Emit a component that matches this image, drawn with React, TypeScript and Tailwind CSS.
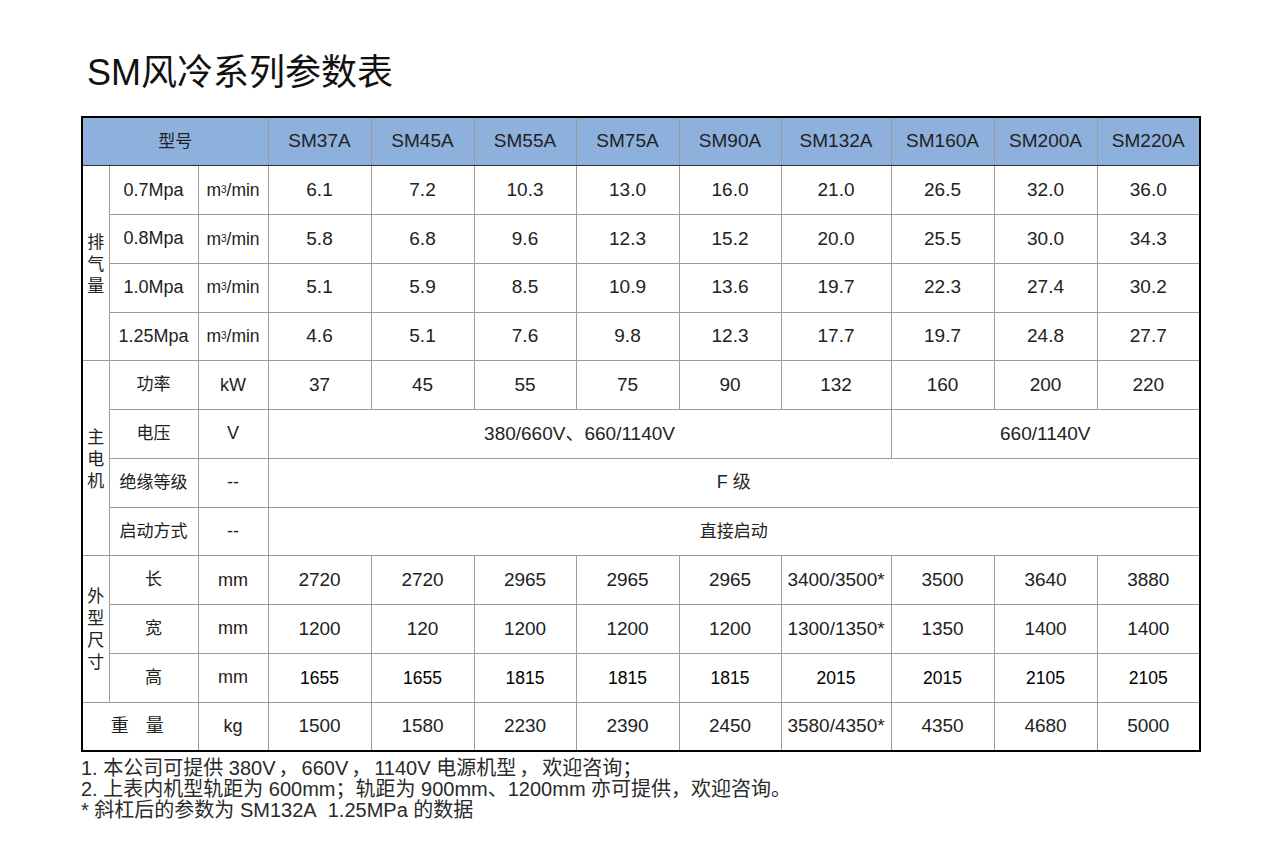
const models = ['SM37A', 'SM45A', 'SM55A', 'SM75A', 'SM90A', 'SM132A', 'SM160A', 'SM200A', 'SM220A'];

const flow = [
  { p: '0.7Mpa', v: ['6.1', '7.2', '10.3', '13.0', '16.0', '21.0', '26.5', '32.0', '36.0'] },
  { p: '0.8Mpa', v: ['5.8', '6.8', '9.6', '12.3', '15.2', '20.0', '25.5', '30.0', '34.3'] },
  { p: '1.0Mpa', v: ['5.1', '5.9', '8.5', '10.9', '13.6', '19.7', '22.3', '27.4', '30.2'] },
  { p: '1.25Mpa', v: ['4.6', '5.1', '7.6', '9.8', '12.3', '17.7', '19.7', '24.8', '27.7'] },
];

const dims = [
  { n: '长', v: ['2720', '2720', '2965', '2965', '2965', '3400/3500*', '3500', '3640', '3880'], strong: false },
  { n: '宽', v: ['1200', '120', '1200', '1200', '1200', '1300/1350*', '1350', '1400', '1400'], strong: false },
  { n: '高', v: ['1655', '1655', '1815', '1815', '1815', '2015', '2015', '2105', '2105'], strong: true },
];

const widths = [27, 89, 70, 103, 103, 102, 103, 102, 110, 103, 103, 103];

const td = 'h-[48.75px] border border-[#9c9c9c] p-0 text-center align-middle';

function Stack({ text }: { text: string }) {
  return (
    <div className="flex flex-col items-center pt-[3px] text-[17px] leading-[22px]">
      {text.split('').map((c, i) => (
        <span key={i}>{c}</span>
      ))}
    </div>
  );
}

function Unit() {
  return (
    <span className="text-[17.5px]">
      m<sup className="relative -top-[3px] text-[10px]">3</sup>/min
    </span>
  );
}

// fullwidth comma with a little air, as in the printed notes
const Comma = () => <span className="mx-[3px]">，</span>;

export default function App() {
  return (
    <div className="min-h-[860px] w-[1280px] bg-white pl-[81px] text-[#222] [font-family:'Liberation_Sans','Noto_Sans_CJK_SC',sans-serif]">
      <h1 className="ml-[6px] pt-[55px] text-[36px] leading-none font-normal text-[#111]">SM风冷系列参数表</h1>
      <table className="mt-[25px] w-[1118px] table-fixed border-collapse border-2 border-black text-[19px]">
        <colgroup>
          {widths.map((w, i) => (
            <col key={i} style={{ width: w }} />
          ))}
        </colgroup>
        <thead>
          <tr className="bg-[#8db0dd]">
            <th colSpan={3} className={`${td} border-b-[#333] text-[17px] font-normal`}>型号</th>
            {models.map((m) => (
              <th key={m} className={`${td} border-b-[#333] font-normal`}>{m}</th>
            ))}
          </tr>
        </thead>
        <tbody>
          {flow.map((r, i) => (
            <tr key={r.p}>
              {i === 0 && (
                <td rowSpan={4} className={td}>
                  <Stack text="排气量" />
                </td>
              )}
              <td className={`${td} text-[18px]`}>{r.p}</td>
              <td className={td}>
                <Unit />
              </td>
              {r.v.map((v, j) => (
                <td key={j} className={td}>{v}</td>
              ))}
            </tr>
          ))}

          <tr>
            <td rowSpan={4} className={td}>
              <Stack text="主电机" />
            </td>
            <td className={`${td} text-[17px]`}>功率</td>
            <td className={`${td} text-[18px]`}>kW</td>
            {['37', '45', '55', '75', '90', '132', '160', '200', '220'].map((v, j) => (
              <td key={j} className={td}>{v}</td>
            ))}
          </tr>
          <tr>
            <td className={`${td} text-[17px]`}>电压</td>
            <td className={`${td} text-[18px]`}>V</td>
            <td colSpan={6} className={td}>380/660V、660/1140V</td>
            <td colSpan={3} className={`${td} border-l-[#555]`}>660/1140V</td>
          </tr>
          <tr>
            <td className={`${td} text-[17px]`}>绝缘等级</td>
            <td className={`${td} text-[18px]`}>--</td>
            <td colSpan={9} className={`${td} text-[18px]`}>F 级</td>
          </tr>
          <tr>
            <td className={`${td} text-[17px]`}>启动方式</td>
            <td className={`${td} text-[18px]`}>--</td>
            <td colSpan={9} className={`${td} text-[17px]`}>直接启动</td>
          </tr>

          {dims.map((r, i) => (
            <tr key={r.n}>
              {i === 0 && (
                <td rowSpan={3} className={td}>
                  <Stack text="外型尺寸" />
                </td>
              )}
              <td className={`${td} text-[17px]`}>{r.n}</td>
              <td className={`${td} text-[18px]`}>mm</td>
              {r.v.map((v, j) => (
                <td key={j} className={`${td} ${r.strong ? 'text-[17.5px] text-black' : ''}`}>{v}</td>
              ))}
            </tr>
          ))}

          <tr>
            <td colSpan={2} className={`${td} text-[18px] tracking-[6px]`}>重 量</td>
            <td className={`${td} text-[18px]`}>kg</td>
            {['1500', '1580', '2230', '2390', '2450', '3580/4350*', '4350', '4680', '5000'].map((v, j) => (
              <td key={j} className={td}>{v}</td>
            ))}
          </tr>
        </tbody>
      </table>
      <div className="pt-[6px] text-[20px] leading-[21px] text-[#2a2a2a]">
        <p>
          1. 本公司可提供 380V<Comma />660V<Comma />1140V 电源机型<Comma />欢迎咨询；
        </p>
        <p>2. 上表内机型轨距为 600mm；轨距为 900mm、1200mm 亦可提供，欢迎咨询。</p>
        <p>* 斜杠后的参数为 SM132A&nbsp;&nbsp;1.25MPa 的数据</p>
      </div>
    </div>
  );
}
